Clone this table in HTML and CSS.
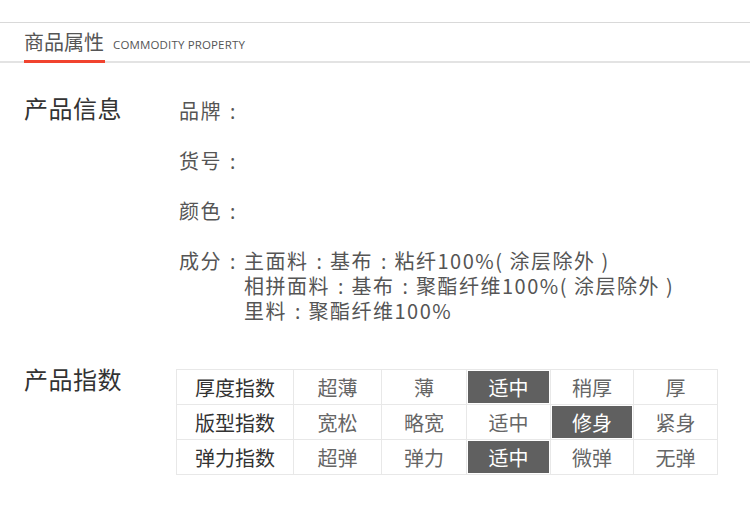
FILE: index.html
```html
<!DOCTYPE html>
<html lang="zh-CN">
<head>
<meta charset="utf-8">
<title>商品属性</title>
<link rel="stylesheet" href="styles.css">
</head>
<body>
<div class="page">
  <div class="head">
    <div class="head-cn">商品属性</div>
    <div class="head-en">COMMODITY PROPERTY</div>
  </div>

  <section class="sec sec-info">
    <div class="sec-label">产品信息</div>
    <div class="info">
      <div class="info-row">品牌<span class="colon">:</span></div>
      <div class="info-row">货号<span class="colon">:</span></div>
      <div class="info-row">颜色<span class="colon">:</span></div>
      <div class="info-row comp">
        <span class="comp-key">成分<span class="colon">:</span></span>
        <div class="comp-lines">
          <div class="comp-line">主面料<span class="colon">:</span>基布<span class="colon">:</span>粘纤100%( 涂层除外 )</div>
          <div class="comp-line">相拼面料<span class="colon">:</span>基布<span class="colon">:</span>聚酯纤维100%( 涂层除外 )</div>
          <div class="comp-line">里料<span class="colon">:</span>聚酯纤维100%</div>
        </div>
      </div>
    </div>
    <div class="watermark"></div>
  </section>

  <section class="sec sec-index">
    <div class="sec-label label-index">产品指数</div>
    <table class="idx">
      <colgroup>
        <col class="c-head"><col class="c-88"><col class="c-85"><col class="c-84"><col class="c-83"><col class="c-84">
      </colgroup>
      <tr>
        <th>厚度指数</th><td>超薄</td><td>薄</td><td class="on">适中</td><td>稍厚</td><td>厚</td>
      </tr>
      <tr>
        <th>版型指数</th><td>宽松</td><td>略宽</td><td>适中</td><td class="on">修身</td><td>紧身</td>
      </tr>
      <tr>
        <th>弹力指数</th><td>超弹</td><td>弹力</td><td class="on">适中</td><td>微弹</td><td>无弹</td>
      </tr>
    </table>
  </section>
</div>
</body>
</html>
```

FILE: styles.css
```css
* { box-sizing: border-box; }
html, body { margin: 0; padding: 0; background: #fff; }
body {
  font-family: "Noto Sans CJK SC", "Noto Sans", sans-serif;
  color: #555;
  width: 750px;
  height: 529px;
  overflow: hidden;
}
.page { padding-top: 22px; }

.head {
  display: flex;
  align-items: flex-end;
  height: 41px;
  padding-left: 24px;
  border-top: 1px solid #d9d9d9;
  border-bottom: 2px solid #e3e3e3;
}
.head-cn {
  font-size: 20px;
  line-height: 20px;
  color: #555;
  padding-bottom: 8px;
  border-bottom: 3px solid #f1432f;
  margin-bottom: -2px;
  width: 81px;
  white-space: nowrap;
}
.head-en {
  font-family: "Open Sans", "Noto Sans", sans-serif;
  font-size: 11.5px;
  line-height: 12px;
  color: #555;
  margin-left: 8px;
  margin-bottom: 10px;
  letter-spacing: 0.15px;
}

.sec {
  display: flex;
  align-items: flex-start;
  padding-left: 24px;
  position: relative;
}
.sec-info { padding-top: 32px; }
.sec-label {
  width: 155px;
  font-size: 24px;
  line-height: 25px;
  letter-spacing: 0.5px;
  color: #333;
  flex: none;
}
.info {
  margin-top: 3px;
  display: flex;
  flex-direction: column;
  gap: 25px;
  font-size: 20px;
  line-height: 25px;
  letter-spacing: 1.5px;
  color: #555;
}
.colon {
  display: inline-block;
  width: 21.5px;
  text-align: center;
  letter-spacing: 0;
  font-family: "Noto Sans", sans-serif;
}
.info-row { white-space: nowrap; height: 25px; }
.comp { display: flex; height: auto; }
.comp-key { flex: none; width: 65px; }
.comp-lines { display: flex; flex-direction: column; }
.comp-line { height: 25px; white-space: nowrap; }

.watermark {
  position: absolute;
  left: 250px;
  top: 120px;
  width: 66px;
  height: 72px;
  border-radius: 50%;
  background: #f9f9f9;
  z-index: -1;
}

.sec-index { margin-top: 43px; }
.label-index { width: 152px; }
.idx {
  margin-top: 3px;
  border-collapse: collapse;
  width: 541px;
  table-layout: fixed;
  font-size: 20px;
}
.c-head { width: 117px; }
.c-88 { width: 88px; }
.c-85 { width: 85px; }
.c-84 { width: 84px; }
.c-83 { width: 83px; }
.idx th, .idx td {
  border: 1px solid #e8e8e8;
  height: 35px;
  padding: 0;
  text-align: center;
  vertical-align: middle;
  line-height: 25px;
  font-weight: normal;
}
.idx th { color: #333; }
.idx td { color: #666; }
.idx td.on {
  background: #606060;
  color: #fff;
  box-shadow: inset 0 0 0 1px #fff;
}
```
